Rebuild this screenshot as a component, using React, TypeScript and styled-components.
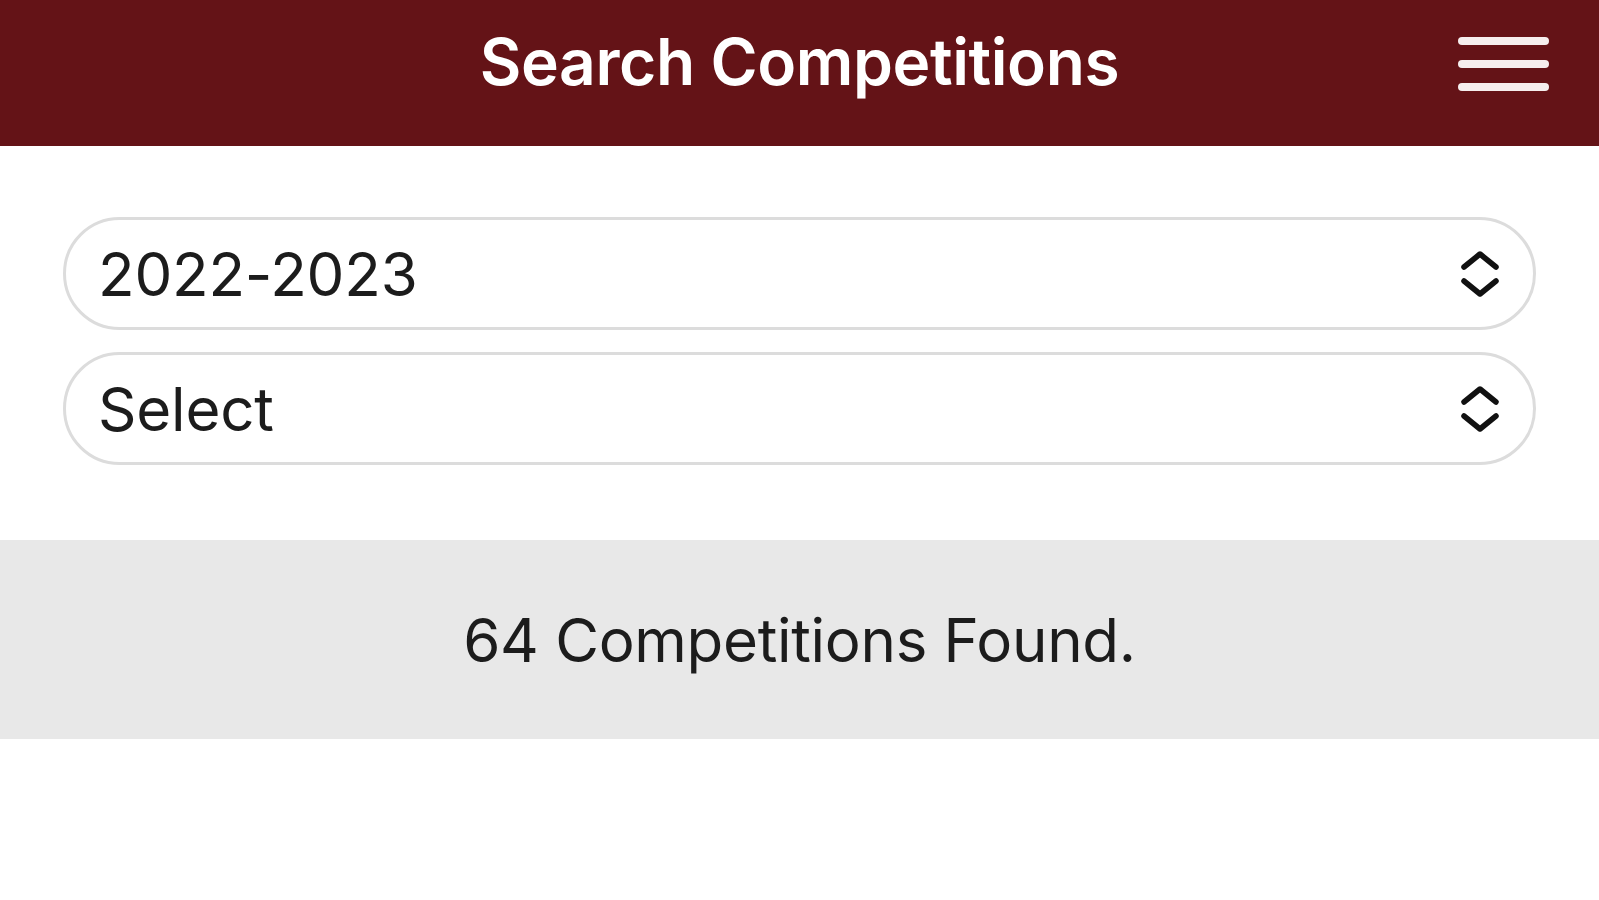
import React, { useState } from "react";
import styled, { createGlobalStyle } from "styled-components";

const GlobalStyle = createGlobalStyle`
  html, body {
    margin: 0;
    padding: 0;
    background: #ffffff;
    font-family: Inter, "Liberation Sans", Arial, sans-serif;
  }
`;

const Page = styled.div`
  display: flex;
  flex-direction: column;
  min-height: 100vh;
  background: #ffffff;
`;

const Header = styled.header`
  height: 146px;
  background-color: #641317;
  display: flex;
  align-items: flex-start;
  justify-content: center;
  position: relative;
`;

const Title = styled.h1`
  margin: 0;
  padding-top: 24px;
  color: #ffffff;
  font-size: 64px;
  font-weight: 600;
  letter-spacing: -0.4px;
  line-height: 76px;
`;

const MenuButton = styled.button`
  position: absolute;
  top: 37px;
  right: 50px;
  width: 91px;
  height: 54px;
  padding: 0;
  border: none;
  background: transparent;
  display: flex;
  flex-direction: column;
  justify-content: space-between;
  align-items: stretch;
  cursor: pointer;
`;

const MenuLine = styled.span`
  display: block;
  height: 8px;
  border-radius: 4px;
  background: #f6eeee;
`;

const Filters = styled.section`
  display: flex;
  flex-direction: column;
  gap: 22px;
  padding: 71px 63px 0 63px;
`;

const SelectWrap = styled.label`
  display: flex;
  align-items: center;
  justify-content: space-between;
  height: 113px;
  box-sizing: border-box;
  border: 3px solid #dcdcdc;
  border-radius: 57px;
  padding: 0 32px 0 32px;
  background: #ffffff;
  cursor: pointer;
`;

const SelectText = styled.span`
  font-size: 60px;
  color: #1c1c1c;
  letter-spacing: -0.2px;
`;

const ResultBand = styled.div`
  margin-top: 75px;
  height: 199px;
  background: #e8e8e8;
  display: flex;
  align-items: center;
  justify-content: center;
`;

const ResultText = styled.p`
  margin: 0;
  font-size: 60px;
  color: #1c1c1c;
  letter-spacing: -0.3px;
`;

const Chevrons: React.FC = () => (
  <svg width="42" height="48" viewBox="0 0 42 48" fill="none">
    <path d="M5 17 L21 4 L37 17" stroke="#111" strokeWidth="5.5" strokeLinecap="round" strokeLinejoin="round" />
    <path d="M5 31 L21 44 L37 31" stroke="#111" strokeWidth="5.5" strokeLinecap="round" strokeLinejoin="round" />
  </svg>
);

interface PickerProps {
  value: string;
}

const Picker: React.FC<PickerProps> = ({ value }) => (
  <SelectWrap>
    <SelectText>{value}</SelectText>
    <Chevrons />
  </SelectWrap>
);

const App: React.FC = () => {
  const [season] = useState("2022-2023");
  const [count] = useState(64);

  return (
    <Page>
      <GlobalStyle />
      <Header>
        <Title>Search Competitions</Title>
        <MenuButton aria-label="Menu">
          <MenuLine />
          <MenuLine />
          <MenuLine />
        </MenuButton>
      </Header>
      <Filters>
        <Picker value={season} />
        <Picker value="Select" />
      </Filters>
      <ResultBand>
        <ResultText>{count} Competitions Found.</ResultText>
      </ResultBand>
    </Page>
  );
};

export default App;
